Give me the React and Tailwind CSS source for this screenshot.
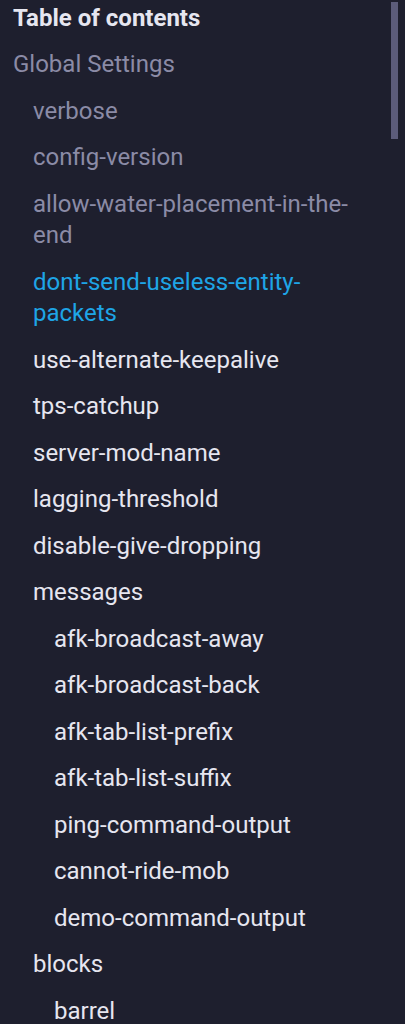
const items = [
  { label: 'Global Settings', level: 0, tone: 'muted' },
  { label: 'verbose', level: 1, tone: 'muted' },
  { label: 'config-version', level: 1, tone: 'muted' },
  { label: 'allow-water-placement-in-the-end', level: 1, tone: 'muted' },
  { label: 'dont-send-useless-entity-packets', level: 1, tone: 'active' },
  { label: 'use-alternate-keepalive', level: 1 },
  { label: 'tps-catchup', level: 1 },
  { label: 'server-mod-name', level: 1 },
  { label: 'lagging-threshold', level: 1 },
  { label: 'disable-give-dropping', level: 1 },
  { label: 'messages', level: 1 },
  { label: 'afk-broadcast-away', level: 2 },
  { label: 'afk-broadcast-back', level: 2 },
  { label: 'afk-tab-list-prefix', level: 2 },
  { label: 'afk-tab-list-suffix', level: 2 },
  { label: 'ping-command-output', level: 2 },
  { label: 'cannot-ride-mob', level: 2 },
  { label: 'demo-command-output', level: 2 },
  { label: 'blocks', level: 1 },
  { label: 'barrel', level: 2 },
]

const indent = ['pl-0', 'pl-[20px]', 'pl-[41px]']
const tones = {
  muted: 'text-[#8b8ba6]',
  active: 'text-[#1ea5e6]',
  normal: 'text-[#e6e6f0]',
}

const App = () => {
  return (
    <div
      className="relative h-[1024px] w-[405px] overflow-hidden bg-[#1e1f2e]"
      style={{ fontFamily: 'Roboto, "Noto Sans", sans-serif' }}
    >
      <div className="absolute right-[7px] top-[2px] h-[137px] w-[7px] bg-[#5c5c7a]" />
      <nav className="flex flex-col gap-[15px] pl-[13px] pr-[30px] pt-[2px]">
        <h2 className="text-[24px] font-bold leading-8 text-[#e6e6f0]">Table of contents</h2>
        {items.map((item) => (
          <a
            key={item.label}
            className={`block text-[24px] leading-[31.5px] ${indent[item.level]} ${tones[item.tone ?? 'normal']}`}
          >
            {item.label}
          </a>
        ))}
      </nav>
    </div>
  )
}

export default App
